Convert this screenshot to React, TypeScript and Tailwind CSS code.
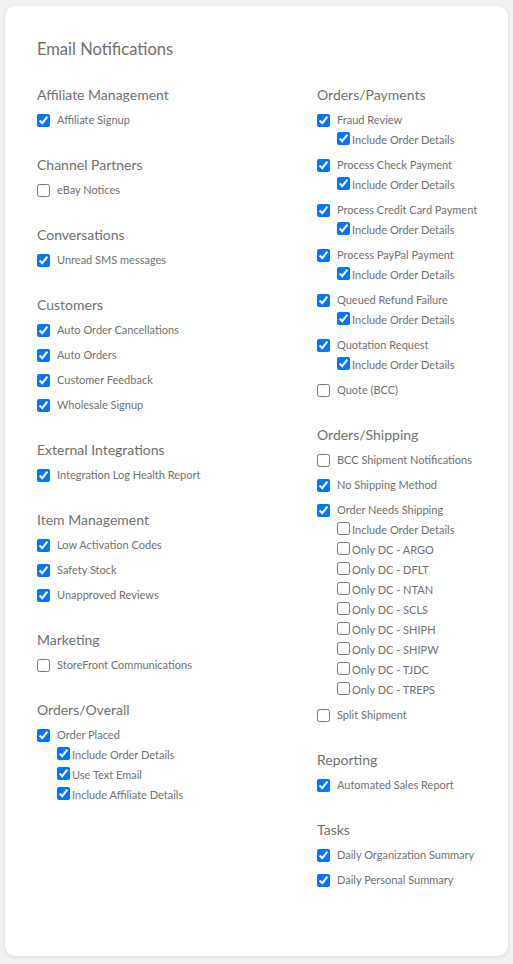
type Item = {
  label: string;
  checked: boolean;
  subs?: { label: string; checked: boolean }[];
};

type Section = {
  title: string;
  items: Item[];
};

const inc = (checked = true) => [{ label: "Include Order Details", checked }];

const left: Section[] = [
  { title: "Affiliate Management", items: [{ label: "Affiliate Signup", checked: true }] },
  { title: "Channel Partners", items: [{ label: "eBay Notices", checked: false }] },
  { title: "Conversations", items: [{ label: "Unread SMS messages", checked: true }] },
  {
    title: "Customers",
    items: [
      { label: "Auto Order Cancellations", checked: true },
      { label: "Auto Orders", checked: true },
      { label: "Customer Feedback", checked: true },
      { label: "Wholesale Signup", checked: true },
    ],
  },
  {
    title: "External Integrations",
    items: [{ label: "Integration Log Health Report", checked: true }],
  },
  {
    title: "Item Management",
    items: [
      { label: "Low Activation Codes", checked: true },
      { label: "Safety Stock", checked: true },
      { label: "Unapproved Reviews", checked: true },
    ],
  },
  { title: "Marketing", items: [{ label: "StoreFront Communications", checked: false }] },
  {
    title: "Orders/Overall",
    items: [
      {
        label: "Order Placed",
        checked: true,
        subs: [
          { label: "Include Order Details", checked: true },
          { label: "Use Text Email", checked: true },
          { label: "Include Affiliate Details", checked: true },
        ],
      },
    ],
  },
];

const dcs = ["ARGO", "DFLT", "NTAN", "SCLS", "SHIPH", "SHIPW", "TJDC", "TREPS"];

const right: Section[] = [
  {
    title: "Orders/Payments",
    items: [
      { label: "Fraud Review", checked: true, subs: inc() },
      { label: "Process Check Payment", checked: true, subs: inc() },
      { label: "Process Credit Card Payment", checked: true, subs: inc() },
      { label: "Process PayPal Payment", checked: true, subs: inc() },
      { label: "Queued Refund Failure", checked: true, subs: inc() },
      { label: "Quotation Request", checked: true, subs: inc() },
      { label: "Quote (BCC)", checked: false },
    ],
  },
  {
    title: "Orders/Shipping",
    items: [
      { label: "BCC Shipment Notifications", checked: false },
      { label: "No Shipping Method", checked: true },
      {
        label: "Order Needs Shipping",
        checked: true,
        subs: [
          { label: "Include Order Details", checked: false },
          ...dcs.map((d) => ({ label: `Only DC - ${d}`, checked: false })),
        ],
      },
      { label: "Split Shipment", checked: false },
    ],
  },
  { title: "Reporting", items: [{ label: "Automated Sales Report", checked: true }] },
  {
    title: "Tasks",
    items: [
      { label: "Daily Organization Summary", checked: true },
      { label: "Daily Personal Summary", checked: true },
    ],
  },
];

function Column({ sections }: { sections: Section[] }) {
  return (
    <div className="flex flex-col gap-[25px]">
      {sections.map((section) => (
        <div key={section.title}>
          <h3 className="h-5 leading-5 text-[14px] text-[#707070]">{section.title}</h3>
          <div className="mt-[5px] flex flex-col gap-[5px]">
            {section.items.map((item) => (
              <div key={item.label}>
                <label className="flex h-5 items-center gap-[7px] whitespace-nowrap text-[11px] text-[#707070]">
                  <input type="checkbox" defaultChecked={item.checked} className="h-[13px] w-[13px]" />
                  <span>{item.label}</span>
                </label>
                {item.subs?.map((sub) => (
                  <label
                    key={sub.label}
                    className="ml-5 flex h-5 items-center gap-[2px] whitespace-nowrap text-[11px] text-[#707070]"
                  >
                    <input
                      type="checkbox"
                      defaultChecked={sub.checked}
                      className="-mt-[3px] h-[13px] w-[13px]"
                    />
                    <span>{sub.label}</span>
                  </label>
                ))}
              </div>
            ))}
          </div>
        </div>
      ))}
    </div>
  );
}

export default function App() {
  return (
    <div className="min-h-screen bg-[#f3f3f3] px-[5px] pt-[6px] pb-2 font-['Lato',sans-serif]">
      <div className="h-[950px] rounded-[10px] bg-white pl-8 pr-4 pt-[33px] shadow-[0_1px_4px_rgba(0,0,0,0.12)]">
        <h2 className="h-5 leading-5 text-[16.5px] text-[#707070]">Email Notifications</h2>
        <div className="mt-[26px] grid grid-cols-[280px_1fr]">
          <Column sections={left} />
          <Column sections={right} />
        </div>
      </div>
    </div>
  );
}
